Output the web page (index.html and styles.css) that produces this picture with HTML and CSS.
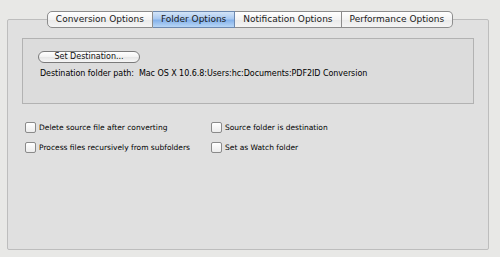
FILE: index.html
```html
<!DOCTYPE html>
<html lang="en">
<head>
    <meta charset="UTF-8">
    <title>Folder Options</title>
    <link rel="stylesheet" href="styles.css">
</head>
<body>
    <div class="window">
        <div class="tabs">
            <div class="tab first">Conversion Options</div>
            <div class="tab active">Folder Options</div>
            <div class="tab">Notification Options</div>
            <div class="tab last">Performance Options</div>
        </div>
        <div class="panel">
            <div class="dest-box">
                <button class="pill-button">Set Destination...</button>
                <div class="path">Destination folder path:&nbsp; Mac OS X 10.6.8:Users:hc:Documents:PDF2ID Conversion</div>
            </div>
            <div class="options">
                <label class="check"><span class="box"></span>Delete source file after converting</label>
                <label class="check"><span class="box"></span>Source folder is destination</label>
                <label class="check"><span class="box"></span>Process files recursively from subfolders</label>
                <label class="check"><span class="box"></span>Set as Watch folder</label>
            </div>
        </div>
    </div>
</body>
</html>
```

FILE: styles.css
```css
body {
    margin: 0;
    background-color: #e8e8e6;
    font-family: "DejaVu Sans", Verdana, sans-serif;
    color: #000;
    overflow: hidden;
}
.window {
    padding: 11px 11px 0 7px;
}
.tabs {
    display: flex;
    justify-content: center;
    position: relative;
    z-index: 1;
    margin-bottom: -9px;
    padding-left: 4px;
}
.tab {
    height: 15px;
    line-height: 15px;
    font-size: 9px;
    padding: 0 8px;
    border: 1px solid #8c8c8c;
    border-left: none;
    background: linear-gradient(#ffffff, #f3f3f3 50%, #e9e9e9 51%, #f4f4f4);
    text-align: center;
    color: #1a1a1a;
}
.tab.first {
    border-left: 1px solid #8c8c8c;
    border-radius: 5px 0 0 5px;
}
.tab.last {
    border-radius: 0 5px 5px 0;
}
.tab.active {
    background: linear-gradient(#d4e5f8, #a9c9f1 45%, #84b1ea 55%, #b8d6f6);
    border-color: #6d89b0;
}
.panel {
    height: 231px;
    box-sizing: border-box;
    border: 1px solid #bdbdbd;
    border-radius: 2px;
    background-color: #e0e0e0;
    padding: 18px 14px 0 14px;
}
.dest-box {
    height: 66px;
    border: 1px solid #b2b2b2;
    background-color: #dcdcdc;
    padding: 12px 0 0 15px;
    box-sizing: border-box;
}
.pill-button {
    display: block;
    width: 102px;
    height: 12px;
    padding: 0;
    font-family: inherit;
    font-size: 8px;
    line-height: 10px;
    color: #111;
    border: 1px solid #7a7a7a;
    border-radius: 6px;
    background: linear-gradient(#ffffff, #f2f2f2 50%, #e6e6e6 51%, #f7f7f7);
}
.path {
    margin-top: 6px;
    margin-left: 2px;
    font-size: 8px;
    line-height: 10px;
    letter-spacing: -0.05px;
}
.options {
    display: grid;
    grid-template-columns: 186px auto;
    row-gap: 9px;
    margin-top: 18px;
    margin-left: 3px;
}
.check {
    display: flex;
    align-items: center;
    gap: 3px;
    font-size: 7.5px;
    line-height: 11px;
}
.box {
    width: 9px;
    height: 9px;
    border: 1px solid #8a8a8a;
    border-radius: 2px;
    background: linear-gradient(#ffffff, #ececec);
}
```
